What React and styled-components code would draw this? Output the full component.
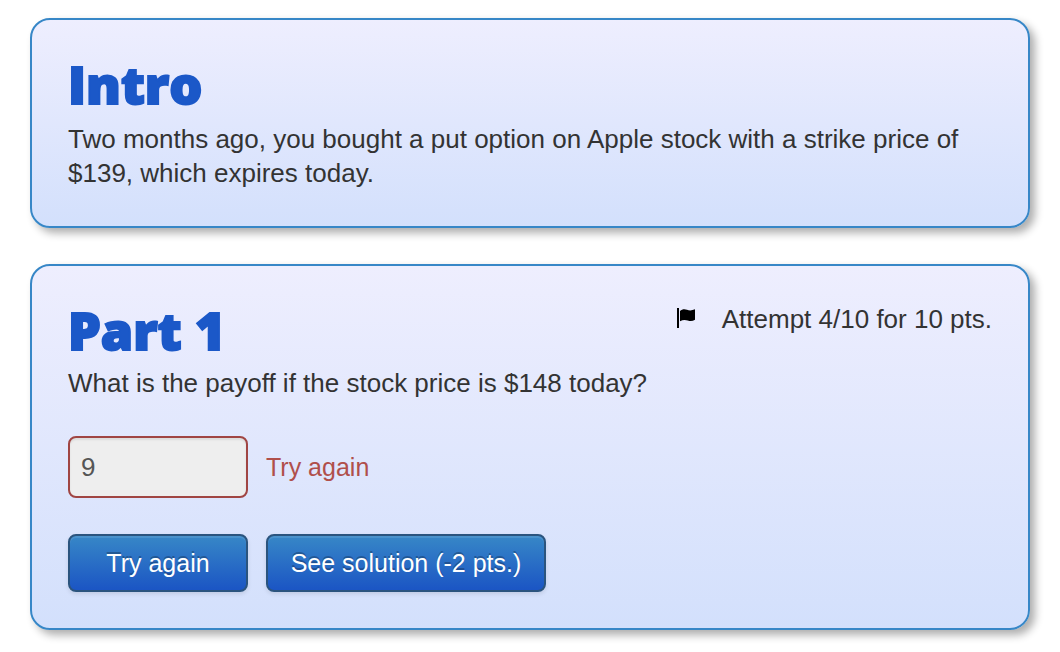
import React, { useState } from "react";
import styled, { createGlobalStyle } from "styled-components";

const GlobalStyle = createGlobalStyle`
  * {
    box-sizing: border-box;
  }

  body {
    margin: 0;
    background: #fff;
    color: #333;
    font-family: "Liberation Sans", Arial, sans-serif;
    font-size: 26px;
    line-height: 34px;
  }
`;

const PageTag = styled.main`
  display: flex;
  flex-direction: column;
  gap: 36px;
  padding: 18px 30px;
`;

const CardTag = styled.section`
  padding: 36px;
  border: 2px solid #3787c7;
  border-radius: 20px;
  background: linear-gradient(#eeeefe, #d3e0fc);
  box-shadow: 5px 5px 8px rgba(0, 0, 0, 0.32);
`;

const CardHead = styled.div`
  display: flex;
  justify-content: space-between;
  align-items: flex-start;
`;

const Title = styled.h2`
  margin: 0 0 ${(props) => (props.$spaced ? "10px" : "8px")};
  color: #1b58c8;
  font-family: "Open Sans", "Liberation Sans", sans-serif;
  font-size: 52px;
  font-weight: 800;
  line-height: 56px;
  -webkit-text-stroke: 2px #1b58c8;
`;

const Text = styled.p`
  margin: 0;
`;

const Attempt = styled.div`
  display: flex;
  gap: 26px;

  svg {
    width: 20px;
    height: 20px;
    margin-top: 6px;
  }
`;

const Row = styled.div`
  display: flex;
  align-items: center;
  gap: 18px;
  margin-top: 36px;
`;

const AnswerInput = styled.input`
  width: 180px;
  height: 62px;
  padding: 0 11px;
  border: 2px solid #a04543;
  border-radius: 8px;
  background: #eee;
  box-shadow: inset 0 2px 2px rgba(0, 0, 0, 0.08);
  color: #555;
  font: inherit;
`;

const Feedback = styled.label`
  color: #b04f4b;
  font-size: 25px;
`;

const Button = styled.button`
  width: ${(props) => (props.$wide ? "280px" : "180px")};
  height: 58px;
  padding: 0;
  border: 2px solid #2b547e;
  border-radius: 8px;
  background: linear-gradient(#3787c7, #1b55c4);
  box-shadow: inset 0 2px 0 rgba(255, 255, 255, 0.1),
    0 2px 4px rgba(0, 0, 0, 0.1);
  color: #fff;
  font: inherit;
  font-size: 25px;
  text-shadow: 0 -2px 0 rgba(0, 0, 0, 0.25);
  white-space: nowrap;
  cursor: pointer;
`;

function FlagIcon() {
  return (
    <svg viewBox="0 0 20 20" aria-hidden="true">
      <path d="M1 0h2v20H1z" />
      <path d="M4 3C6 1.200 8.500.700 11 1.800c2.600 1.100 5 .8 8-.5v10.500c-2.400 1.400-4.600 1.600-7.200.7-2.700-1-5.200-.8-7.800.8z" />
    </svg>
  );
}

function App() {
  const [answer, setAnswer] = useState("9");

  return (
    <PageTag>
      <GlobalStyle />
      <CardTag>
        <Title $spaced>Intro</Title>
        <Text>
          Two months ago, you bought a put option on Apple stock with a strike
          price of $139, which expires today.
        </Text>
      </CardTag>
      <CardTag>
        <CardHead>
          <Title>Part 1</Title>
          <Attempt>
            <FlagIcon />
            <span>Attempt 4/10 for 10 pts.</span>
          </Attempt>
        </CardHead>
        <Text>What is the payoff if the stock price is $148 today?</Text>
        <Row>
          <AnswerInput
            id="answer"
            type="text"
            value={answer}
            onChange={(e) => setAnswer(e.target.value)}
          />
          <Feedback htmlFor="answer">Try again</Feedback>
        </Row>
        <Row>
          <Button type="button">Try again</Button>
          <Button type="button" $wide>
            See solution (-2 pts.)
          </Button>
        </Row>
      </CardTag>
    </PageTag>
  );
}

export default App;
